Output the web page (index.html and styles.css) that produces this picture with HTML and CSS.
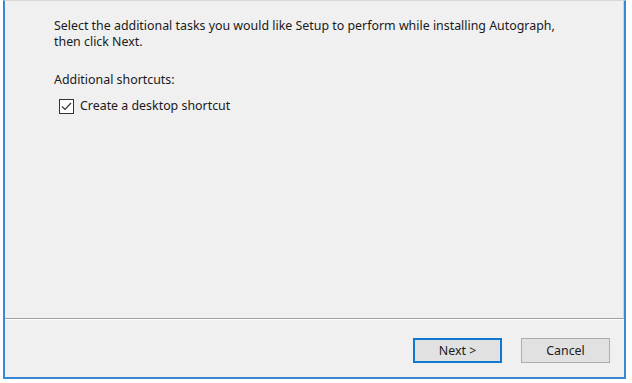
FILE: index.html
```html
<!DOCTYPE html>
<html lang="en">
<head>
    <meta charset="UTF-8">
    <title>Setup - Autograph</title>
    <link rel="stylesheet" href="styles.css">
</head>
<body>
    <div class="setup-window">
        <div class="task-page">
            <p class="intro">Select the additional tasks you would like Setup to perform while installing Autograph, then click Next.</p>
            <p class="group-label">Additional shortcuts:</p>
            <label class="task-option">
                <span class="check-box">
                    <svg width="11" height="9" viewBox="0 0 11 9"><path d="M1 4.5 L4 7.5 L10 1" fill="none" stroke="#333" stroke-width="1.2"/></svg>
                </span>
                Create a desktop shortcut
            </label>
        </div>

        <div class="button-bar">
            <button class="wiz-button default">Next &gt;</button>
            <button class="wiz-button">Cancel</button>
        </div>
    </div>
</body>
</html>
```

FILE: styles.css
```css
body {
    margin: 0;
    background-color: #fff;
    font-family: "Noto Sans", "Open Sans", sans-serif;
    font-size: 12.4px;
    color: #1a1a1a;
}
.setup-window {
    margin-left: 3px;
    width: 619px;
    height: 376px;
    background-color: #f0f0f0;
    border-top: 1px solid #d8d8d8;
    border-left: 2px solid #3a87d4;
    border-right: 2px solid #3a87d4;
    border-bottom: 2px solid #3a87d4;
    display: flex;
    flex-direction: column;
}
.task-page {
    flex: 1;
    padding: 17px 30px 0 49px;
    border-right: 1px solid #c9d6e2;
    border-bottom: 1px solid #a0a0a0;
}
.intro {
    margin: 0;
    line-height: 16px;
    width: 520px;
}
.group-label {
    margin: 22px 0 0 0;
    line-height: 16px;
}
.task-option {
    display: flex;
    align-items: center;
    gap: 6px;
    margin-top: 10px;
    margin-left: 5px;
    line-height: 16px;
}
.check-box {
    width: 13px;
    height: 13px;
    border: 1px solid #333;
    background-color: #fff;
    display: flex;
    align-items: center;
    justify-content: center;
}
.button-bar {
    height: 58px;
    display: flex;
    justify-content: flex-end;
    align-items: flex-start;
    gap: 19px;
    padding: 18px 14px 0 0;
    box-sizing: border-box;
    border-top: 1px solid #fff;
}
.wiz-button {
    width: 89px;
    height: 25px;
    font-family: "Noto Sans", "Open Sans", sans-serif;
    font-size: 12.4px;
    color: #1a1a1a;
    background-color: #e1e1e1;
    border: 1px solid #adadad;
    padding: 0;
}
.wiz-button.default {
    border: 2px solid #0f78d2;
}
```
